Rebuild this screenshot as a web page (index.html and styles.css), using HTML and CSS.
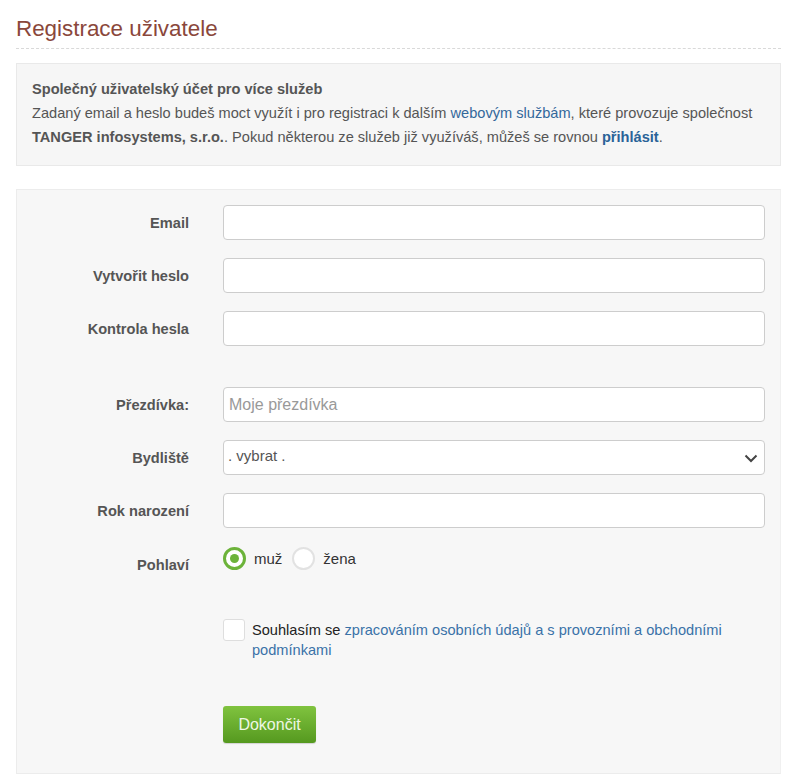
FILE: index.html
```html
<!DOCTYPE html>
<html lang="cs">
<head>
<meta charset="utf-8">
<title>Registrace uživatele</title>
<link rel="stylesheet" href="styles.css">
</head>
<body>
<div class="page">
  <h1 class="title">Registrace uživatele</h1>

  <div class="info">
    <div class="info-head">Společný uživatelský účet pro více služeb</div>
    <p class="info-text">Zadaný email a heslo budeš moct využít i pro registraci k dalším <a href="#" class="link">webovým službám</a>, které provozuje společnost <b>TANGER infosystems, s.r.o.</b>. Pokud některou ze služeb již využíváš, můžeš se rovnou <a href="#" class="link strong">přihlásit</a>.</p>
  </div>

  <form class="form">
    <div class="row">
      <label class="label">Email</label>
      <input class="control" type="text">
    </div>
    <div class="row">
      <label class="label">Vytvořit heslo</label>
      <input class="control" type="password">
    </div>
    <div class="row">
      <label class="label">Kontrola hesla</label>
      <input class="control" type="password">
    </div>

    <div class="spacer"></div>

    <div class="row">
      <label class="label">Přezdívka:</label>
      <input class="control" type="text" placeholder="Moje přezdívka">
    </div>
    <div class="row">
      <label class="label">Bydliště</label>
      <div class="select-wrap">
        <select class="control select"><option>. vybrat .</option></select>
        <svg class="chevron" width="14" height="9" viewBox="0 0 14 9"><path d="M1.5 1.5 L7 7 L12.5 1.5" fill="none" stroke="#444" stroke-width="2"/></svg>
      </div>
    </div>
    <div class="row">
      <label class="label">Rok narození</label>
      <input class="control" type="text">
    </div>
    <div class="row row-top">
      <label class="label label-top">Pohlaví</label>
      <div class="radios">
        <label class="radio"><input type="radio" name="g" class="radio-input" checked><span>muž</span></label>
        <label class="radio"><input type="radio" name="g" class="radio-input"><span>žena</span></label>
      </div>
    </div>

    <div class="row row-check">
      <span class="label"></span>
      <label class="check">
        <input type="checkbox" class="check-input">
        <span class="check-text">Souhlasím se <a href="#" class="link">zpracováním osobních údajů a s provozními a obchodními podmínkami</a></span>
      </label>
    </div>

    <div class="row row-btn">
      <span class="label"></span>
      <div><button type="button" class="btn">Dokončit</button></div>
    </div>
  </form>
</div>
</body>
</html>
```

FILE: styles.css
```css
* { box-sizing: border-box; }

html, body {
  margin: 0;
  padding: 0;
  background: #fff;
}

body {
  font-family: "Liberation Sans", Arial, sans-serif;
  font-size: 14.6px;
  color: #555;
}

.page {
  padding: 0 15px 0 16px;
}

.title {
  margin: 16px 0 0;
  font-size: 22.4px;
  line-height: 26px;
  font-weight: normal;
  color: #8a473b;
  padding-bottom: 6px;
  border-bottom: 1px dashed #d9d9d9;
}

.info {
  margin-top: 14px;
  background: #f6f6f6;
  border: 1px solid #e9e9e9;
  padding: 13px 15px 16px;
  line-height: 24px;
}

.info-head {
  font-weight: bold;
  color: #555;
}

.info-text {
  margin: 0;
}

.info-text b {
  color: #555;
}

.link {
  color: #33689b;
  text-decoration: none;
}

.link.strong {
  font-weight: bold;
  color: #2a6398;
}

.form {
  margin-top: 23px;
  background: #f7f7f7;
  border: 1px solid #ececec;
  border-right-color: #f0f0f0;
  padding: 15px 15px 30px 0;
}

.row {
  display: grid;
  grid-template-columns: 172px 1fr;
  column-gap: 34px;
  align-items: center;
  margin-bottom: 18px;
}

.row-top {
  align-items: start;
  margin-bottom: 46px;
}

.row-check {
  align-items: start;
  margin-bottom: 46px;
}

.row-btn {
  margin-bottom: 0;
}

.spacer {
  height: 23px;
}

.label {
  text-align: right;
  font-weight: bold;
  color: #555;
  font-size: 14.6px;
}

.label-top {
  padding-top: 11px;
}

.control {
  display: block;
  width: 100%;
  height: 35px;
  border: 1px solid #cdcdcd;
  border-radius: 4px;
  background: #fff;
  font-family: "Liberation Sans", Arial, sans-serif;
  font-size: 16px;
  color: #555;
  padding: 0 5px;
  outline: none;
}

.control::placeholder {
  color: #999;
}

.select-wrap {
  position: relative;
}

.select {
  appearance: none;
  -webkit-appearance: none;
  font-size: 15px;
  padding: 0 4px 4px;
}

.chevron {
  position: absolute;
  right: 7px;
  top: 14px;
  pointer-events: none;
}

.radios {
  display: flex;
  align-items: center;
  gap: 10px;
  padding-top: 1px;
}

.radio {
  display: flex;
  align-items: center;
  gap: 8px;
  font-size: 15px;
  color: #333;
}

.radio-input {
  appearance: none;
  -webkit-appearance: none;
  margin: 0;
  width: 23px;
  height: 23px;
  border-radius: 50%;
  border: 2px solid #e2e2e2;
  background: #fff;
  display: grid;
  place-items: center;
}

.radio-input:checked {
  border: 3px solid #6cb33a;
}

.radio-input:checked::after {
  content: "";
  width: 9px;
  height: 9px;
  border-radius: 50%;
  background: #6cb33a;
}

.check {
  display: flex;
  align-items: flex-start;
  gap: 7px;
  font-size: 14.6px;
  line-height: 20px;
  color: #222;
}

.check-input {
  appearance: none;
  -webkit-appearance: none;
  margin: 0;
  flex: none;
  width: 22px;
  height: 22px;
  border: 1px solid #dedede;
  border-radius: 3px;
  background: #fff;
}

.check-text {
  padding-top: 1px;
}

.check-text .link {
  color: #3a72a8;
}

.btn {
  width: 93px;
  height: 37px;
  border: none;
  border-radius: 3px;
  background: linear-gradient(#80c33f, #55991f);
  color: #eef7e4;
  font-family: "Liberation Sans", Arial, sans-serif;
  font-size: 16px;
  padding: 0;
  box-shadow: 0 1px 1px rgba(0,0,0,0.15);
}
```
